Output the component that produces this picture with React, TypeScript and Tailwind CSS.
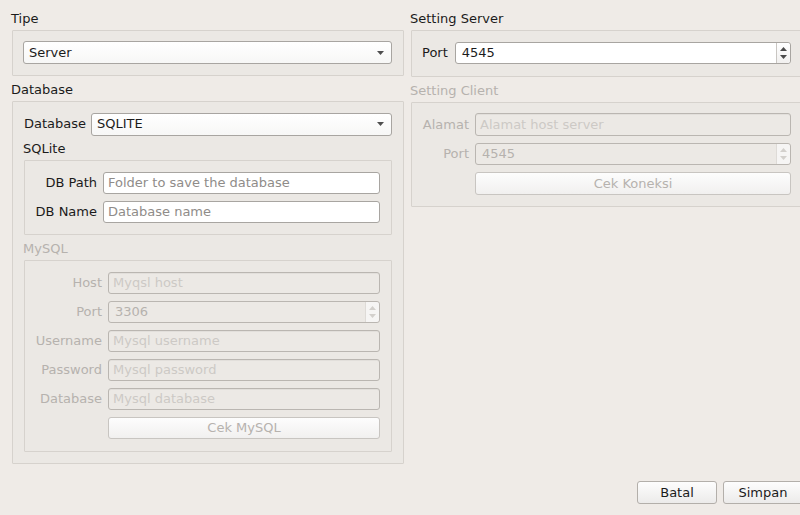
import type { ReactNode } from "react";

// Dialog "Pengaturan" – Qt style form, drawn with flow layout

function GroupBox({
  title,
  disabled,
  className = "",
  children,
}: {
  title: string;
  disabled?: boolean;
  className?: string;
  children: ReactNode;
}) {
  return (
    <div className="flex flex-col">
      <div
        className={`h-[18px] leading-[14px] -ml-px ${
          disabled ? "text-[#b6b2ae]" : "text-[#1b1b1b]"
        }`}
      >
        {title}
      </div>
      <div
        className={`border border-[#d6d2cd] bg-[#ebe8e4] rounded-[1px] ${className}`}
      >
        {children}
      </div>
    </div>
  );
}

function LineEdit({
  placeholder,
  value,
  disabled,
  h = "h-[22px]",
}: {
  placeholder?: string;
  value?: string;
  disabled?: boolean;
  h?: string;
}) {
  return (
    <div
      className={`${h} flex items-center px-[4px] rounded-[3px] border ${
        disabled
          ? "border-[#bab6b1] bg-[#ece9e5] shadow-[inset_0_1px_0_#e2dfdb]"
          : "border-[#a8a5a1] bg-white"
      }`}
    >
      {value ? (
        <span className={disabled ? "text-[#b6b2ae]" : "text-[#1b1b1b]"}>
          {value}
        </span>
      ) : (
        <span className={disabled ? "text-[#cdc9c5]" : "text-[#8f8c89]"}>
          {placeholder}
        </span>
      )}
    </div>
  );
}

function SpinBox({ value, disabled }: { value: string; disabled?: boolean }) {
  const arrow = disabled ? "#d3d0cc" : "#4a4a4a";
  return (
    <div
      className={`h-[22px] flex rounded-[3px] border ${
        disabled ? "border-[#bab6b1] bg-[#ece9e5]" : "border-[#a8a5a1] bg-white"
      }`}
    >
      <div
        className={`flex-1 flex items-center pl-[6px] ${
          disabled ? "text-[#b6b2ae]" : "text-[#1b1b1b]"
        }`}
      >
        {value}
      </div>
      <div
        className={`w-[14px] flex flex-col items-center justify-center gap-[4px] border-l rounded-r-[3px] ${
          disabled
            ? "border-[#dedbd7] bg-[#f6f5f4]"
            : "border-[#c9c6c2] bg-gradient-to-b from-white to-[#f1f0ef]"
        }`}
      >
        <svg width="7" height="4" viewBox="0 0 7 4">
          <path d="M0 4 L3.5 0 L7 4 Z" fill={arrow} />
        </svg>
        <svg width="7" height="4" viewBox="0 0 7 4">
          <path d="M0 0 L7 0 L3.5 4 Z" fill={arrow} />
        </svg>
      </div>
    </div>
  );
}

function ComboBox({ value }: { value: string }) {
  return (
    <div className="h-[23px] flex-1 flex items-center justify-between pl-[5px] pr-[7px] rounded-[3px] border border-[#a8a5a1] bg-gradient-to-b from-white to-[#f7f7f6]">
      <span className="text-[#1b1b1b]">{value}</span>
      <svg width="7" height="4" viewBox="0 0 7 4">
        <path d="M0 0 L7 0 L3.5 4 Z" fill="#4f4f4f" />
      </svg>
    </div>
  );
}

function PushButton({
  label,
  disabled,
  className = "h-[23px]",
}: {
  label: string;
  disabled?: boolean;
  className?: string;
}) {
  return (
    <div
      className={`flex items-center justify-center rounded-[3px] border bg-gradient-to-b ${
        disabled
          ? "border-[#c8c5c1] from-[#fdfdfd] to-[#f1f0ef] text-[#b6b2ae]"
          : "border-[#b3afaa] from-[#fdfdfd] to-[#ecebea] text-[#1b1b1b]"
      } ${className}`}
    >
      {label}
    </div>
  );
}

function Label({ text, disabled }: { text: string; disabled?: boolean }) {
  return (
    <div
      className={`text-right whitespace-nowrap ${
        disabled ? "text-[#b6b2ae]" : "text-[#1b1b1b]"
      }`}
    >
      {text}
    </div>
  );
}

export default function App() {
  return (
    <div className="w-[800px] h-[515px] overflow-hidden bg-[#efebe7] font-['DejaVu_Sans',sans-serif] text-[13px] leading-[16px]">
      <div className="w-[802px] h-full flex flex-col">
        <div className="flex pl-[12px] pt-[12px] gap-[7px]">
          {/* kolom kiri */}
          <div className="w-[392px] flex flex-col gap-[7px]">
            <GroupBox title="Tipe" className="pl-[10px] pr-[11px] pt-[10px] pb-[11px]">
              <div className="flex">
                <ComboBox value="Server" />
              </div>
            </GroupBox>

            <GroupBox title="Database" className="pl-[11px] pr-[11px] pt-[10px] pb-[11px]">
              <div className="flex items-center gap-[5px] h-[24px]">
                <span className="text-[#1b1b1b]">Database</span>
                <ComboBox value="SQLITE" />
              </div>

              <div className="mt-[6px]">
                <GroupBox title="SQLite" className="pr-[11px] py-[11px]">
                  <div className="grid grid-cols-[72px_1fr] gap-x-[6px] gap-y-[7px] items-center">
                    <Label text="DB Path" />
                    <LineEdit placeholder="Folder to save the database" />
                    <Label text="DB Name" />
                    <LineEdit placeholder="Database name" />
                  </div>
                </GroupBox>
              </div>

              <div className="mt-[7px]">
                <GroupBox title="MySQL" disabled className="pr-[11px] pt-[11px] pb-[12px]">
                  <div className="grid grid-cols-[77px_1fr] gap-x-[6px] gap-y-[7px] items-center">
                    <Label text="Host" disabled />
                    <LineEdit placeholder="Myqsl host" disabled />
                    <Label text="Port" disabled />
                    <SpinBox value="3306" disabled />
                    <Label text="Username" disabled />
                    <LineEdit placeholder="Mysql username" disabled />
                    <Label text="Password" disabled />
                    <LineEdit placeholder="Mysql password" disabled />
                    <Label text="Database" disabled />
                    <LineEdit placeholder="Mysql database" disabled />
                    <div />
                    <PushButton label="Cek MySQL" disabled className="h-[22px]" />
                  </div>
                </GroupBox>
              </div>
            </GroupBox>
          </div>

          {/* kolom kanan */}
          <div className="w-[391px] flex flex-col gap-[7px]">
            <GroupBox title="Setting Server" className="pl-[10px] pr-[10px] pt-[11px] pb-[12px]">
              <div className="flex items-center gap-[7px]">
                <span className="text-[#1b1b1b]">Port</span>
                <div className="flex-1">
                  <SpinBox value="4545" />
                </div>
              </div>
            </GroupBox>

            <GroupBox title="Setting Client" disabled className="pr-[10px] pt-[10px] pb-[11px]">
              <div className="grid grid-cols-[57px_1fr] gap-x-[6px] gap-y-[7px] items-center">
                <Label text="Alamat" disabled />
                <LineEdit placeholder="Alamat host server" disabled h="h-[23px]" />
                <Label text="Port" disabled />
                <SpinBox value="4545" disabled />
                <div />
                <PushButton label="Cek Koneksi" disabled />
              </div>
            </GroupBox>
          </div>
        </div>

        <div className="mt-auto flex justify-end gap-[6px] pb-[11px] mr-[-1px]">
          <PushButton label="Batal" className="h-[23px] w-[80px]" />
          <PushButton label="Simpan" className="h-[23px] w-[80px]" />
        </div>
      </div>
    </div>
  );
}
